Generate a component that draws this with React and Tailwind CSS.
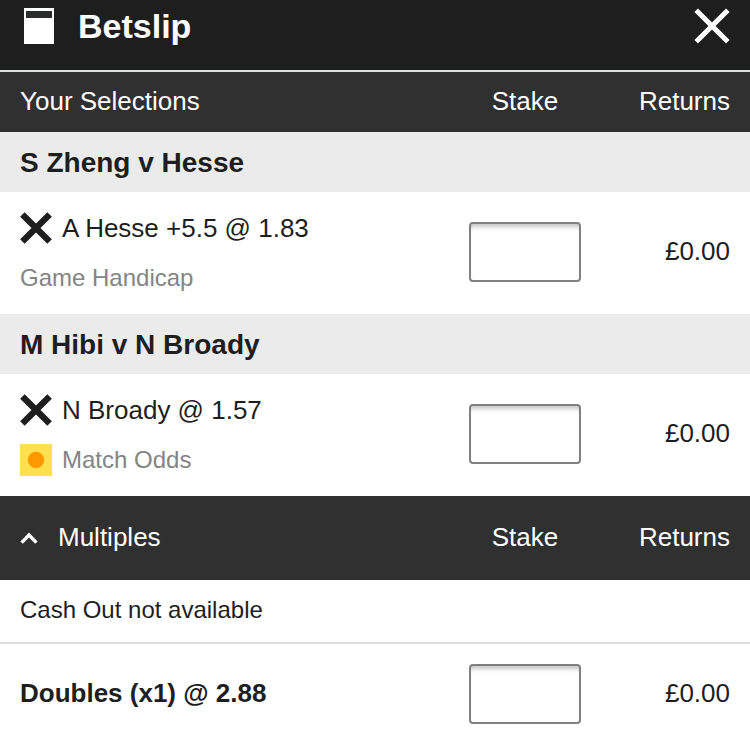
import { useState } from "react";

const selections = [
  {
    id: "zheng-hesse",
    event: "S Zheng v Hesse",
    name: "A Hesse +5.5 @ 1.83",
    market: "Game Handicap",
    live: false,
  },
  {
    id: "hibi-broady",
    event: "M Hibi v N Broady",
    name: "N Broady @ 1.57",
    market: "Match Odds",
    live: true,
  },
];

const SlipIcon = () => (
  <svg className="w-[30px] h-9" viewBox="0 0 30 36" aria-hidden="true">
    <rect width="30" height="36" fill="#fff" />
    <rect x="2" y="3" width="26" height="7" fill="#2b2d2d" />
  </svg>
);

const CloseIcon = () => (
  <svg className="w-9 h-9" viewBox="0 0 36 36" aria-hidden="true">
    <path d="M2.2 2.2 33.8 33.8M33.8 2.2 2.2 33.8" stroke="#fff" strokeWidth="5" />
  </svg>
);

const RemoveIcon = () => (
  <svg className="w-8 h-8" viewBox="0 0 32 32" aria-hidden="true">
    <path d="M2.4 2.4 29.6 29.6M29.6 2.4 2.4 29.6" stroke="#1e1e1e" strokeWidth="6.4" />
  </svg>
);

const LiveIcon = () => (
  <svg className="w-8 h-8" viewBox="0 0 32 32" aria-hidden="true">
    <rect width="32" height="32" fill="#ffe150" />
    <circle cx="16" cy="16" r="8.2" fill="#ff9800" />
  </svg>
);

const ChevronIcon = ({ open }) => (
  <svg
    className={`w-[18px] h-3.5 ${open ? "" : "rotate-180"}`}
    viewBox="0 0 18 14"
    aria-hidden="true"
  >
    <path d="M1.6 12.6 9 5 16.4 12.6" fill="none" stroke="#fff" strokeWidth="3.4" />
  </svg>
);

const StakeColumns = () => (
  <>
    <span className="w-28 text-center">Stake</span>
    <span className="w-[149px] text-right">Returns</span>
  </>
);

const StakeRow = ({ label, value, onChange }) => (
  <>
    <input
      type="text"
      inputMode="decimal"
      aria-label={label}
      className="w-28 h-[60px] px-3 bg-white border-2 border-[#808080] rounded shadow-[inset_0_6px_4px_-3px_#c8c8c8] text-center"
      value={value}
      onChange={(e) => onChange(e.target.value)}
    />
    <span className="w-[149px] pb-0.5 text-right">£0.00</span>
  </>
);

const App = () => {
  const [stakes, setStakes] = useState({});
  const [showMultiples, setShowMultiples] = useState(true);

  const setStake = (id, value) => setStakes((prev) => ({ ...prev, [id]: value }));

  return (
    <main className="min-h-screen bg-white text-[#1e1e1e] text-[26px] leading-8 font-['Liberation_Sans',Arial,sans-serif]">
      <header className="flex items-start h-[72px] px-5 bg-[#1e1e1e] text-white border-b-2 border-[#dcdfdf]">
        <div className="flex items-center gap-6 pl-1 pt-2">
          <SlipIcon />
          <h1 className="text-[34px] leading-9 font-bold">Betslip</h1>
        </div>
        <button type="button" aria-label="Close" className="ml-auto pt-2 cursor-pointer">
          <CloseIcon />
        </button>
      </header>

      <div className="flex items-center h-[60px] px-5 pb-0.5 bg-[#303030] text-white">
        <h2 className="flex-1">Your Selections</h2>
        <StakeColumns />
      </div>

      {selections.map((s) => (
        <section key={s.id}>
          <h3 className="px-5 pt-[15px] pb-[13px] bg-[#ebebeb] text-[28px] font-bold">{s.event}</h3>
          <div className="flex items-start px-5 py-5">
            <div className="flex-1 flex flex-col gap-[18px]">
              <div className="flex items-center gap-2.5">
                <button type="button" aria-label={`Remove ${s.name}`} className="cursor-pointer">
                  <RemoveIcon />
                </button>
                <span>{s.name}</span>
              </div>
              <div className="flex items-center gap-2.5 text-2xl leading-8 text-[#848484]">
                {s.live && <LiveIcon />}
                <span>{s.market}</span>
              </div>
            </div>
            <div className="flex items-center pt-2.5">
              <StakeRow
                label={`Stake for ${s.name}`}
                value={stakes[s.id] || ""}
                onChange={(v) => setStake(s.id, v)}
              />
            </div>
          </div>
        </section>
      ))}

      <div className="flex items-center h-[84px] px-5 pb-0.5 bg-[#303030] text-white">
        <h2 className="flex-1">
          <button
            type="button"
            aria-expanded={showMultiples}
            className="flex items-center gap-5 cursor-pointer"
            onClick={() => setShowMultiples(!showMultiples)}
          >
            <ChevronIcon open={showMultiples} />
            Multiples
          </button>
        </h2>
        <StakeColumns />
      </div>

      {showMultiples && (
        <section>
          <p className="px-5 pt-3.5 pb-4 border-b-2 border-[#dedede] text-2xl leading-8">
            Cash Out not available
          </p>
          <div className="flex items-center px-5 pt-5 pb-3.5">
            <span className="flex-1 pb-0.5 font-bold">Doubles (x1) @ 2.88</span>
            <StakeRow
              label="Stake for Doubles"
              value={stakes.doubles || ""}
              onChange={(v) => setStake("doubles", v)}
            />
          </div>
        </section>
      )}
    </main>
  );
};

export default App;
